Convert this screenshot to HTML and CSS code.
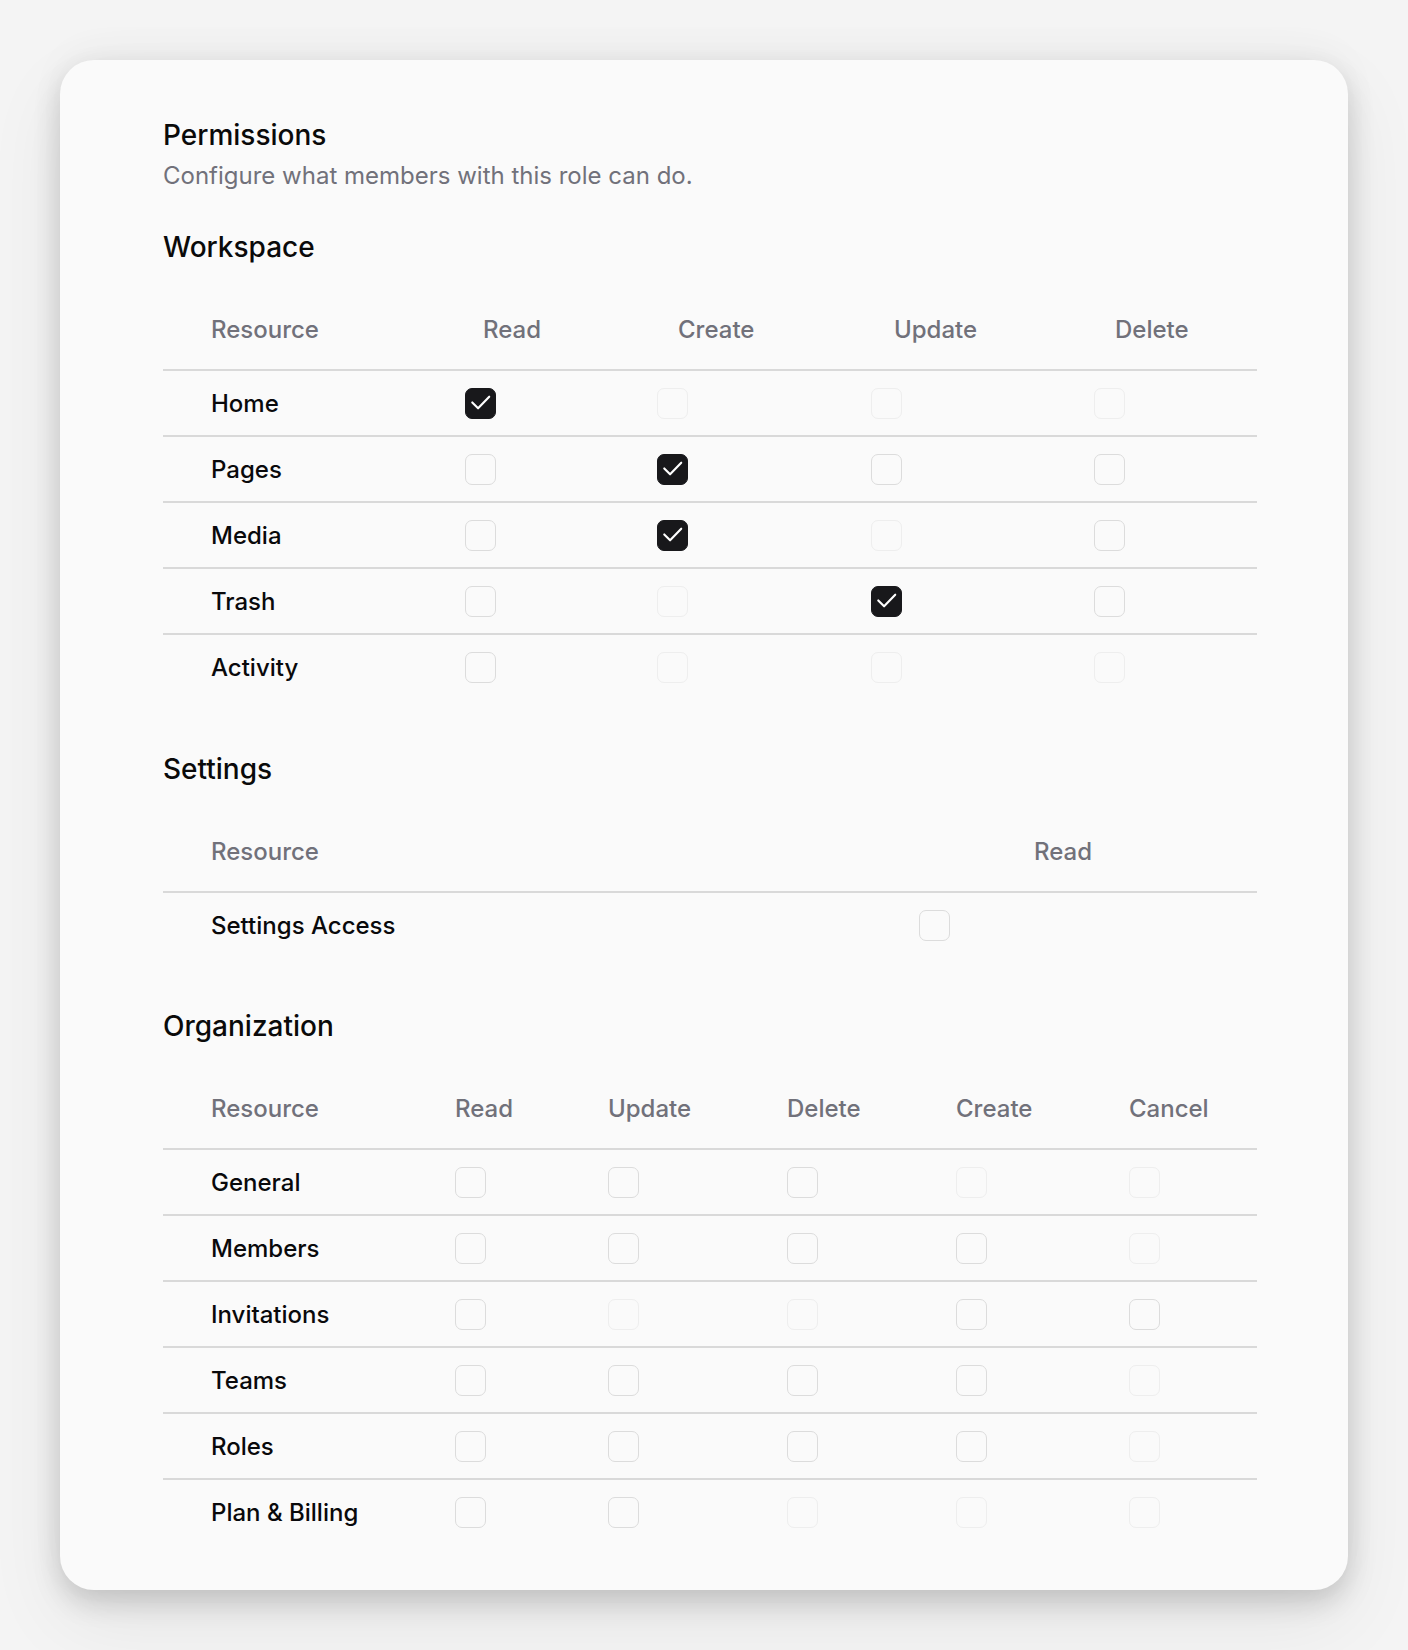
FILE: index.html
```html
<!DOCTYPE html>
<html lang="en">
<head>
<meta charset="utf-8">
<title>Permissions</title>
<link rel="stylesheet" href="styles.css">
</head>
<body>
<div class="card">
  <h1 class="title">Permissions</h1>
  <p class="subtitle">Configure what members with this role can do.</p>

  <section class="section">
    <h2 class="section-title">Workspace</h2>
    <div class="table">
      <div class="head ws-head">
        <span>Resource</span><span>Read</span><span>Create</span><span>Update</span><span>Delete</span>
      </div>
      <div class="row ws-row">
        <span class="label">Home</span>
        <span class="cb on"><svg viewBox="0 0 32 32"><polyline points="7.5,16 13.5,22 25,10"/></svg></span>
        <span class="cb faint"></span><span class="cb faint"></span><span class="cb faint"></span>
      </div>
      <div class="row ws-row">
        <span class="label">Pages</span>
        <span class="cb"></span>
        <span class="cb on"><svg viewBox="0 0 32 32"><polyline points="7.5,16 13.5,22 25,10"/></svg></span>
        <span class="cb"></span><span class="cb"></span>
      </div>
      <div class="row ws-row">
        <span class="label">Media</span>
        <span class="cb"></span>
        <span class="cb on"><svg viewBox="0 0 32 32"><polyline points="7.5,16 13.5,22 25,10"/></svg></span>
        <span class="cb faint"></span><span class="cb"></span>
      </div>
      <div class="row ws-row">
        <span class="label">Trash</span>
        <span class="cb"></span><span class="cb faint"></span>
        <span class="cb on"><svg viewBox="0 0 32 32"><polyline points="7.5,16 13.5,22 25,10"/></svg></span>
        <span class="cb"></span>
      </div>
      <div class="row ws-row">
        <span class="label">Activity</span>
        <span class="cb"></span><span class="cb faint"></span><span class="cb faint"></span><span class="cb faint"></span>
      </div>
    </div>
  </section>

  <section class="section">
    <h2 class="section-title">Settings</h2>
    <div class="table">
      <div class="head st-head">
        <span>Resource</span><span>Read</span>
      </div>
      <div class="row st-row">
        <span class="label">Settings Access</span>
        <span class="cb"></span>
      </div>
    </div>
  </section>

  <section class="section last">
    <h2 class="section-title">Organization</h2>
    <div class="table">
      <div class="head org">
        <span>Resource</span><span>Read</span><span>Update</span><span>Delete</span><span>Create</span><span>Cancel</span>
      </div>
      <div class="row org">
        <span class="label">General</span>
        <span class="cb"></span><span class="cb"></span><span class="cb"></span><span class="cb faint"></span><span class="cb faint"></span>
      </div>
      <div class="row org">
        <span class="label">Members</span>
        <span class="cb"></span><span class="cb"></span><span class="cb"></span><span class="cb"></span><span class="cb faint"></span>
      </div>
      <div class="row org">
        <span class="label">Invitations</span>
        <span class="cb"></span><span class="cb faint"></span><span class="cb faint"></span><span class="cb"></span><span class="cb"></span>
      </div>
      <div class="row org">
        <span class="label">Teams</span>
        <span class="cb"></span><span class="cb"></span><span class="cb"></span><span class="cb"></span><span class="cb faint"></span>
      </div>
      <div class="row org">
        <span class="label">Roles</span>
        <span class="cb"></span><span class="cb"></span><span class="cb"></span><span class="cb"></span><span class="cb faint"></span>
      </div>
      <div class="row org">
        <span class="label">Plan &amp; Billing</span>
        <span class="cb"></span><span class="cb"></span><span class="cb faint"></span><span class="cb faint"></span><span class="cb faint"></span>
      </div>
    </div>
  </section>
</div>
</body>
</html>
```

FILE: styles.css
```css
* { box-sizing: border-box; }

html, body {
  margin: 0;
  padding: 0;
}

body {
  background: #f4f4f4;
  font-family: Inter, "Noto Sans", "Liberation Sans", sans-serif;
  color: #0a0a0a;
  padding: 60px;
}

.card {
  width: 1288px;
  background: #fafafa;
  border-radius: 34px;
  padding: 53px 91px 44px 103px;
  box-shadow: 0 12px 28px rgba(0, 0, 0, 0.16), 0 30px 80px rgba(0, 0, 0, 0.07), 0 -10px 40px rgba(0, 0, 0, 0.03);
}

.title {
  margin: 0;
  font-size: 28px;
  line-height: 44px;
  font-weight: 500;
}

.subtitle {
  margin: 1px 0 0;
  font-size: 24px;
  line-height: 36px;
  font-weight: 400;
  color: #71717a;
}

.section { margin-top: 46px; }
.subtitle + .section { margin-top: 31px; }
.section.last { margin-top: 45px; }

.section-title {
  margin: 0 0 22px;
  font-size: 28px;
  line-height: 44px;
  font-weight: 500;
}

.head, .row {
  display: grid;
  align-items: center;
  border-bottom: 2px solid #d9d9d9;
}

.head {
  height: 80px;
  padding-bottom: 1px;
  font-size: 24px;
  font-weight: 500;
  color: #71717a;
}

.head span:first-child,
.label {
  padding-left: 48px;
}

.row {
  height: 66px;
  font-size: 24px;
  font-weight: 500;
  color: #09090b;
}

.row:last-child { border-bottom-color: transparent; }

.ws-head { grid-template-columns: 320px 195px 216px 221px 1fr; }
.ws-row  { grid-template-columns: 302px 192px 214px 223px 1fr; }
.st-head { grid-template-columns: 871px 1fr; }
.st-row  { grid-template-columns: 756px 1fr; }
.org     { grid-template-columns: 292px 153px 179px 169px 173px 1fr; }

.cb {
  width: 31px;
  height: 31px;
  border: 1.5px solid #dcdcdc;
  border-radius: 7px;
  background: #fafafa;
  display: block;
}

.cb.faint { border-color: #eeeeee; }

.cb.on {
  background: #18181b;
  border-color: #18181b;
}

.cb svg {
  display: block;
  margin: -1.5px;
  width: 31px;
  height: 31px;
}

.cb svg polyline {
  fill: none;
  stroke: #ffffff;
  stroke-width: 2.2;
  stroke-linecap: round;
  stroke-linejoin: round;
}
```
